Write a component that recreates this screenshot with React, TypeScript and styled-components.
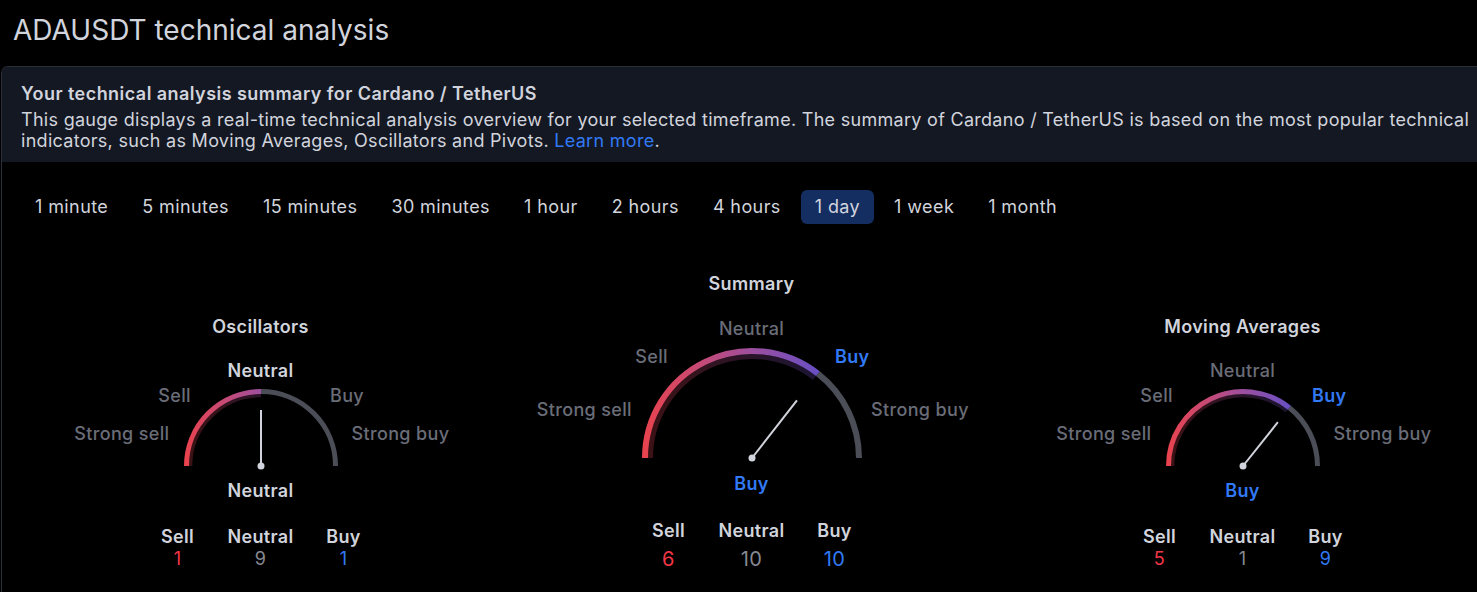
import React from 'react';
import styled, { createGlobalStyle } from 'styled-components';

const Global = createGlobalStyle`
  html, body { margin: 0; padding: 0; background: #000; overflow: hidden; }
  body {
    font-family: Inter, "Noto Sans", "Liberation Sans", sans-serif;
    color: #d1d4dc;
    letter-spacing: 0.35px;
  }
`;

const Page = styled.div`
  width: 1477px;
  height: 592px;
  overflow: hidden;
`;

const PageTitle = styled.h1`
  margin: 0;
  padding: 12px 0 0 13px;
  font-size: 28px;
  font-weight: 400;
  line-height: 36px;
  letter-spacing: 0;
  color: #d1d4dc;
`;

const Card = styled.section`
  margin: 18px 0 0 1px;
  width: 1540px;
  border-left: 1px solid #2a2e39;
  border-top: 1px solid #2a2e39;
  border-top-left-radius: 7px;
  overflow: hidden;
  height: 540px;
`;

const Header = styled.div`
  background: #141823;
  padding: 16px 20px 11px 19px;
`;

const HeaderTitle = styled.h2`
  margin: 0;
  font-size: 18px;
  line-height: 21px;
  font-weight: 600;
  letter-spacing: 0.45px;
  color: #d1d4dc;
`;

const Description = styled.p`
  margin: 5px 0 0;
  max-width: 1470px;
  font-size: 18px;
  line-height: 21px;
  letter-spacing: 0.29px;
  color: #d1d4dc;
`;

const Link = styled.a`
  color: #3179f5;
  text-decoration: none;
`;

const Tabs = styled.div`
  display: flex;
  gap: 6px;
  padding: 28px 0 0 19px;
`;

const Tab = styled.button<{ $active?: boolean }>`
  all: unset;
  height: 34px;
  padding: 0 14px;
  border-radius: 6px;
  font-family: Inter, "Noto Sans", sans-serif;
  font-size: 18px;
  letter-spacing: 0.4px;
  line-height: 34px;
  color: #d1d4dc;
  background: ${(p) => (p.$active ? '#142e61' : 'transparent')};
  white-space: nowrap;
`;

const GaugeGrid = styled.div`
  display: grid;
  grid-template-columns: repeat(3, 491px);
  padding: 50px 0 0 13px;
`;

const Column = styled.div<{ $large?: boolean }>`
  display: flex;
  flex-direction: column;
  align-items: center;
  padding-top: ${(p) => (p.$large ? 0 : 43)}px;
`;

const GaugeTitle = styled.div`
  font-size: 18px;
  line-height: 20px;
  font-weight: 600;
  color: #d1d4dc;
`;

const GaugeBox = styled.div<{ $w: number; $h: number }>`
  position: relative;
  margin-top: 19px;
  width: ${(p) => p.$w}px;
  height: ${(p) => p.$h}px;
  svg { display: block; }
`;

type Tone = 'dim' | 'neutral' | 'buy';
const toneColor = (t: Tone) => (t === 'buy' ? '#3179f5' : t === 'neutral' ? '#d1d4dc' : '#6a6d78');

const ArcLabel = styled.span<{ $x: number; $y: number; $anchor: 'start' | 'middle' | 'end'; $tone: Tone }>`
  position: absolute;
  left: ${(p) => p.$x}px;
  top: ${(p) => p.$y}px;
  transform: translate(${(p) => (p.$anchor === 'start' ? '0' : p.$anchor === 'middle' ? '-50%' : '-100%')}, -50%);
  white-space: nowrap;
  font-size: 18px;
  line-height: 20px;
  font-weight: ${(p) => (p.$tone === 'dim' ? 500 : 600)};
  color: ${(p) => toneColor(p.$tone)};
`;

const Result = styled.div<{ $tone: Tone; $large?: boolean }>`
  margin-top: ${(p) => (p.$large ? 8 : 7)}px;
  font-size: 18px;
  line-height: 20px;
  font-weight: 600;
  color: ${(p) => toneColor(p.$tone)};
`;

const Counts = styled.div<{ $large?: boolean }>`
  display: grid;
  grid-template-columns: repeat(3, 83px);
  justify-items: center;
  margin-top: ${(p) => (p.$large ? 27 : 26)}px;
`;

const CountCell = styled.div`
  display: flex;
  flex-direction: column;
  align-items: center;
`;

const CountHead = styled.div`
  font-size: 18px;
  line-height: 20px;
  font-weight: 600;
  color: #d1d4dc;
`;

const CountValue = styled.div<{ $kind: 'sell' | 'neutral' | 'buy'; $large?: boolean }>`
  margin-top: ${(p) => (p.$large ? 7 : 2)}px;
  font-size: ${(p) => (p.$large ? 20 : 18)}px;
  line-height: ${(p) => (p.$large ? 22 : 20)}px;
  color: ${(p) => (p.$kind === 'sell' ? '#f23645' : p.$kind === 'buy' ? '#3179f5' : '#868993')};
`;

const rad = (d: number) => (d * Math.PI) / 180;

function arc(cx: number, cy: number, r: number, a0: number, a1: number) {
  const x0 = cx + r * Math.cos(rad(a0));
  const y0 = cy - r * Math.sin(rad(a0));
  const x1 = cx + r * Math.cos(rad(a1));
  const y1 = cy - r * Math.sin(rad(a1));
  return `M ${x0.toFixed(2)} ${y0.toFixed(2)} A ${r} ${r} 0 0 1 ${x1.toFixed(2)} ${y1.toFixed(2)}`;
}

type Geo = {
  w: number; h: number; cx: number; cy: number;
  rb: number; wb: number; rd: number; wd: number; needle: number;
  neutralY: number; sideY: number; sideX: number; strongY: number; strongX: number;
};

const SMALL: Geo = { w: 420, h: 118, cx: 210, cy: 110, rb: 74.5, wb: 5, rd: 70.5, wd: 3.5, needle: 56, neutralY: -95, sideY: -70, sideX: 69.5, strongY: -32, strongX: 91 };
const LARGE: Geo = { w: 460, h: 153, cx: 230, cy: 145, rb: 107, wb: 6, rd: 101.5, wd: 5, needle: 73, neutralY: -129, sideY: -101, sideX: 83.5, strongY: -48, strongX: 119.5 };

type Verdict = 'Strong sell' | 'Sell' | 'Neutral' | 'Buy' | 'Strong buy';

function Gauge({ id, title, angle, verdict, counts, large }: { id: string; title: string; angle: number; verdict: Verdict; counts: [number, number, number]; large?: boolean }) {
  const g = large ? LARGE : SMALL;
  const tone = (v: Verdict): Tone => (v !== verdict ? 'dim' : v.includes('uy') ? 'buy' : 'neutral');
  const nx = g.cx + g.needle * Math.cos(rad(angle));
  const ny = g.cy - g.needle * Math.sin(rad(angle));
  const labels: { t: Verdict; x: number; y: number; a: 'start' | 'middle' | 'end' }[] = [
    { t: 'Strong sell', x: g.cx - g.strongX, y: g.cy + g.strongY, a: 'end' },
    { t: 'Sell', x: g.cx - g.sideX, y: g.cy + g.sideY, a: 'end' },
    { t: 'Neutral', x: g.cx, y: g.cy + g.neutralY, a: 'middle' },
    { t: 'Buy', x: g.cx + g.sideX, y: g.cy + g.sideY, a: 'start' },
    { t: 'Strong buy', x: g.cx + g.strongX, y: g.cy + g.strongY, a: 'start' },
  ];
  return (
    <Column $large={large}>
      <GaugeTitle>{title}</GaugeTitle>
      <GaugeBox $w={g.w} $h={g.h}>
        <svg width={g.w} height={g.h} viewBox={`0 0 ${g.w} ${g.h}`}>
          <defs>
            <linearGradient id={id} gradientUnits="userSpaceOnUse" x1={g.cx - g.rb} y1="0" x2={g.cx + g.rb} y2="0">
              <stop offset="0" stopColor="#e8434f" />
              <stop offset="0.25" stopColor="#c84a74" />
              <stop offset="0.5" stopColor="#9d4f9f" />
              <stop offset="0.8" stopColor="#6a4fc2" />
              <stop offset="1" stopColor="#3d5af0" />
            </linearGradient>
          </defs>
          <path d={arc(g.cx, g.cy, g.rb, angle, 0)} fill="none" stroke="#4b4e57" strokeWidth={g.wb} />
          <path d={arc(g.cx, g.cy, g.rb, 180, angle)} fill="none" stroke={`url(#${id})`} strokeWidth={g.wb} />
          <path d={arc(g.cx, g.cy, g.rd, 180, angle)} fill="none" stroke={`url(#${id})`} strokeOpacity={0.26} strokeWidth={g.wd} />
          <line x1={g.cx} y1={g.cy} x2={nx} y2={ny} stroke="#d1d4dc" strokeWidth={2} />
          <circle cx={g.cx} cy={g.cy} r={3.5} fill="#d1d4dc" />
        </svg>
        {labels.map((l) => (
          <ArcLabel key={l.t} $x={l.x} $y={l.y} $anchor={l.a} $tone={tone(l.t)}>
            {l.t}
          </ArcLabel>
        ))}
      </GaugeBox>
      <Result $tone={tone(verdict)} $large={large}>{verdict}</Result>
      <Counts $large={large}>
        <CountCell>
          <CountHead>Sell</CountHead>
          <CountValue $kind="sell" $large={large}>{counts[0]}</CountValue>
        </CountCell>
        <CountCell>
          <CountHead>Neutral</CountHead>
          <CountValue $kind="neutral" $large={large}>{counts[1]}</CountValue>
        </CountCell>
        <CountCell>
          <CountHead>Buy</CountHead>
          <CountValue $kind="buy" $large={large}>{counts[2]}</CountValue>
        </CountCell>
      </Counts>
    </Column>
  );
}

const TIMEFRAMES = ['1 minute', '5 minutes', '15 minutes', '30 minutes', '1 hour', '2 hours', '4 hours', '1 day', '1 week', '1 month'];

export default function App() {
  return (
    <Page>
      <Global />
      <PageTitle>ADAUSDT technical analysis</PageTitle>
      <Card>
        <Header>
          <HeaderTitle>Your technical analysis summary for Cardano / TetherUS</HeaderTitle>
          <Description>
            This gauge displays a real-time technical analysis overview for your selected timeframe. The summary of Cardano / TetherUS is based on the most popular technical indicators, such as Moving Averages, Oscillators and Pivots. <Link href="#">Learn more</Link>.
          </Description>
        </Header>
        <Tabs>
          {TIMEFRAMES.map((t) => (
            <Tab key={t} $active={t === '1 day'}>{t}</Tab>
          ))}
        </Tabs>
        <GaugeGrid>
          <Gauge id="g-osc" title="Oscillators" angle={90} verdict="Neutral" counts={[1, 9, 1]} />
          <Gauge id="g-sum" title="Summary" angle={52} verdict="Buy" counts={[6, 10, 10]} large />
          <Gauge id="g-ma" title="Moving Averages" angle={51.5} verdict="Buy" counts={[5, 1, 9]} />
        </GaugeGrid>
      </Card>
    </Page>
  );
}
